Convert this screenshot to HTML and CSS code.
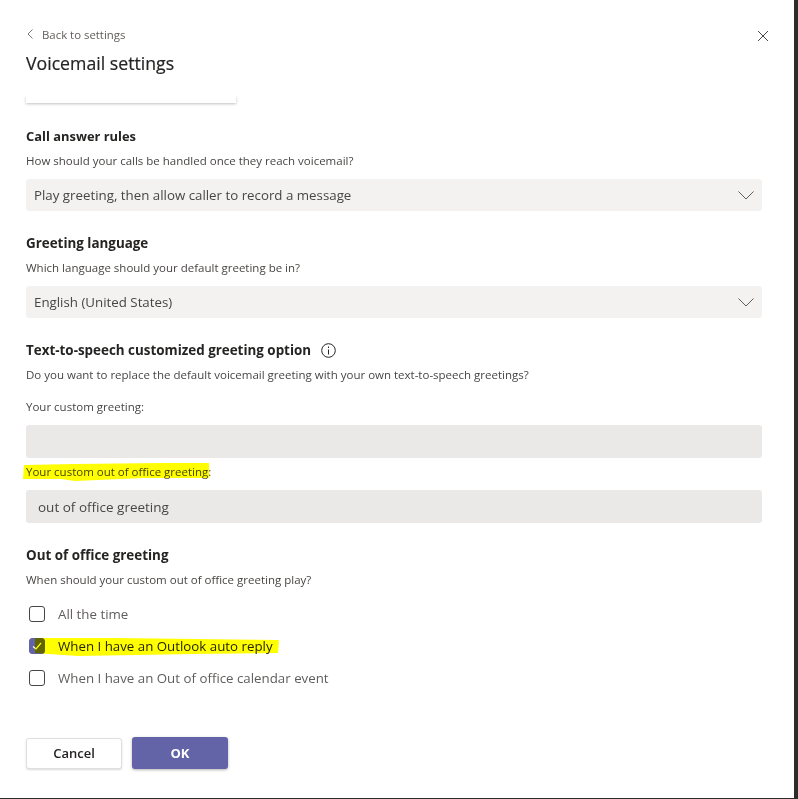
FILE: index.html
```html
<!DOCTYPE html>
<html>
<head>
    <title>Voicemail settings</title>
    <link rel="stylesheet" href="styles.css">
</head>
<body>
    <div class="dialog">
        <div class="header">
            <div class="back">
                <svg class="back-icon" width="8" height="12" viewBox="0 0 8 12"><path d="M6.5 1.5 L2 6 L6.5 10.5" fill="none" stroke="#7a7876" stroke-width="1"/></svg>
                <span>Back to settings</span>
            </div>
            <svg class="close-icon" width="12" height="12" viewBox="0 0 12 12"><path d="M1 1 L11 11 M11 1 L1 11" fill="none" stroke="#484644" stroke-width="1"/></svg>
        </div>
        <h1>Voicemail settings</h1>
        <div class="stub"></div>

        <h2 class="tight">Call answer rules</h2>
        <p class="hint">How should your calls be handled once they reach voicemail?</p>
        <div class="select">
            <span>Play greeting, then allow caller to record a message</span>
            <svg width="16" height="9" viewBox="0 0 16 9"><path d="M0.5 0.5 L8 8 L15.5 0.5" fill="none" stroke="#605e5c" stroke-width="1"/></svg>
        </div>

        <h2>Greeting language</h2>
        <p class="hint">Which language should your default greeting be in?</p>
        <div class="select">
            <span>English (United States)</span>
            <svg width="16" height="9" viewBox="0 0 16 9"><path d="M0.5 0.5 L8 8 L15.5 0.5" fill="none" stroke="#605e5c" stroke-width="1"/></svg>
        </div>

        <h2 class="with-icon">
            Text-to-speech customized greeting option
            <svg width="15" height="15" viewBox="0 0 15 15"><circle cx="7.5" cy="7.5" r="6.8" fill="none" stroke="#252423" stroke-width="1"/><path d="M7.5 6.5 V11.5 M7.5 3.5 V5" stroke="#252423" stroke-width="1"/></svg>
        </h2>
        <p class="hint">Do you want to replace the default voicemail greeting with your own text-to-speech greetings?</p>
        <p class="hint label-first">Your custom greeting:</p>
        <div class="input"></div>
        <div class="marked">
            <p class="hint label">Your custom out of office greeting:</p>
            <svg class="marker marker-label" width="190" height="19" viewBox="0 0 190 19"><path d="M1 2 L52 1 L140 0 L186 0 L186 15 L120 15 L52 18 L38 16 L0 16 Z" fill="#ffff00"/></svg>
        </div>
        <div class="input"><span>out of office greeting</span></div>

        <h2>Out of office greeting</h2>
        <p class="hint">When should your custom out of office greeting play?</p>
        <div class="options">
            <div class="option"><span class="check"></span><span>All the time</span></div>
            <div class="option">
                <span class="check checked">
                    <svg width="16" height="16" viewBox="0 0 16 16"><path d="M4 8.5 L7 11 L12 5" fill="none" stroke="#fff" stroke-width="1.2"/></svg>
                </span>
                <span>When I have an Outlook auto reply</span>
                <svg class="marker marker-option" width="247" height="19" viewBox="0 0 247 19"><path d="M3 1 L80 1 L247 3 L246 16 L160 17 L46 19 L3 16 Z" fill="#ffff00"/></svg>
            </div>
            <div class="option"><span class="check"></span><span>When I have an Out of office calendar event</span></div>
        </div>

        <div class="buttons">
            <button class="btn">Cancel</button>
            <button class="btn primary">OK</button>
        </div>
    </div>
</body>
</html>
```

FILE: styles.css
```css
* {
    box-sizing: border-box;
}

body {
    margin: 0;
    background: #2d2c2c;
    font-family: "Open Sans", "Noto Sans", sans-serif;
    color: #252423;
}

.dialog {
    width: 794px;
    height: 798px;
    background: #fff;
    padding: 0 32px 0 26px;
    overflow: hidden;
}

.header {
    height: 53px;
    padding-top: 25px;
    display: flex;
    justify-content: space-between;
    align-items: flex-start;
}

.back {
    display: flex;
    align-items: center;
    gap: 8px;
    height: 18px;
    font-size: 11.4px;
    color: #605e5c;
}

.close-icon {
    margin: 5px -7px 0 0;
}

h1 {
    margin: 0;
    height: 21px;
    line-height: 21px;
    font-size: 17.7px;
    font-weight: 400;
    -webkit-text-stroke: 0.2px #252423;
}

.stub {
    width: 210px;
    height: 7px;
    margin-top: 22px;
    background: #fff;
    box-shadow: 0 1px 3px rgba(0, 0, 0, 0.25);
    clip-path: inset(0 -4px -4px -4px);
}

h2 {
    margin: 22px 0 0;
    height: 20px;
    line-height: 20px;
    font-size: 13.4px;
    font-weight: 700;
}

h2.tight {
    margin-top: 23px;
    font-size: 12.9px;
}

.with-icon {
    display: flex;
    align-items: center;
    gap: 10px;
}

.hint {
    margin: 7px 0 0;
    height: 16px;
    line-height: 16px;
    font-size: 11.5px;
    color: #484644;
}

.hint.label-first {
    margin-top: 16px;
}

.select {
    display: flex;
    justify-content: space-between;
    align-items: center;
    height: 32px;
    margin-top: 10px;
    padding: 0 8px;
    background: #f3f2f1;
    border-radius: 3px;
    font-size: 13.3px;
    color: #484644;
}

.input {
    display: flex;
    align-items: center;
    height: 33px;
    margin-top: 10px;
    padding: 0 12px;
    background: #ebe9e8;
    border-radius: 3px;
    font-size: 13.5px;
    color: #484644;
}

.marked {
    position: relative;
    margin-top: 6px;
    height: 16px;
}

.marked .label {
    margin: 0;
}

.marker {
    position: absolute;
    mix-blend-mode: multiply;
}

.marker-label {
    left: -3px;
    top: -1px;
}

.options {
    margin-top: 10px;
    padding-left: 3px;
}

.option {
    position: relative;
    display: flex;
    align-items: center;
    gap: 13px;
    height: 32px;
    font-size: 13.3px;
    color: #605e5c;
}

.option:nth-child(2) {
    color: #252423;
}

.check {
    width: 16px;
    height: 16px;
    border: 1px solid #484644;
    border-radius: 3px;
    flex: none;
}

.check.checked {
    position: relative;
    background: #6264a7;
    border-color: #6264a7;
}

.check.checked svg {
    position: absolute;
    left: -1px;
    top: -1px;
}

.marker-option {
    left: 3px;
    top: 7px;
}

.buttons {
    display: flex;
    align-items: center;
    gap: 10px;
    margin-top: 43px;
}

.btn {
    width: 96px;
    height: 31px;
    padding: 0;
    border: 1px solid #e1dfdd;
    border-radius: 3px;
    background: #fff;
    font-family: inherit;
    font-size: 13px;
    font-weight: 600;
    color: #252423;
    box-shadow: 0 1px 2px rgba(0, 0, 0, 0.15);
}

.btn.primary {
    height: 32px;
    border: none;
    background: #6264a7;
    color: #fff;
    font-weight: 700;
    box-shadow: 0 1px 3px rgba(0, 0, 0, 0.3);
}
```
